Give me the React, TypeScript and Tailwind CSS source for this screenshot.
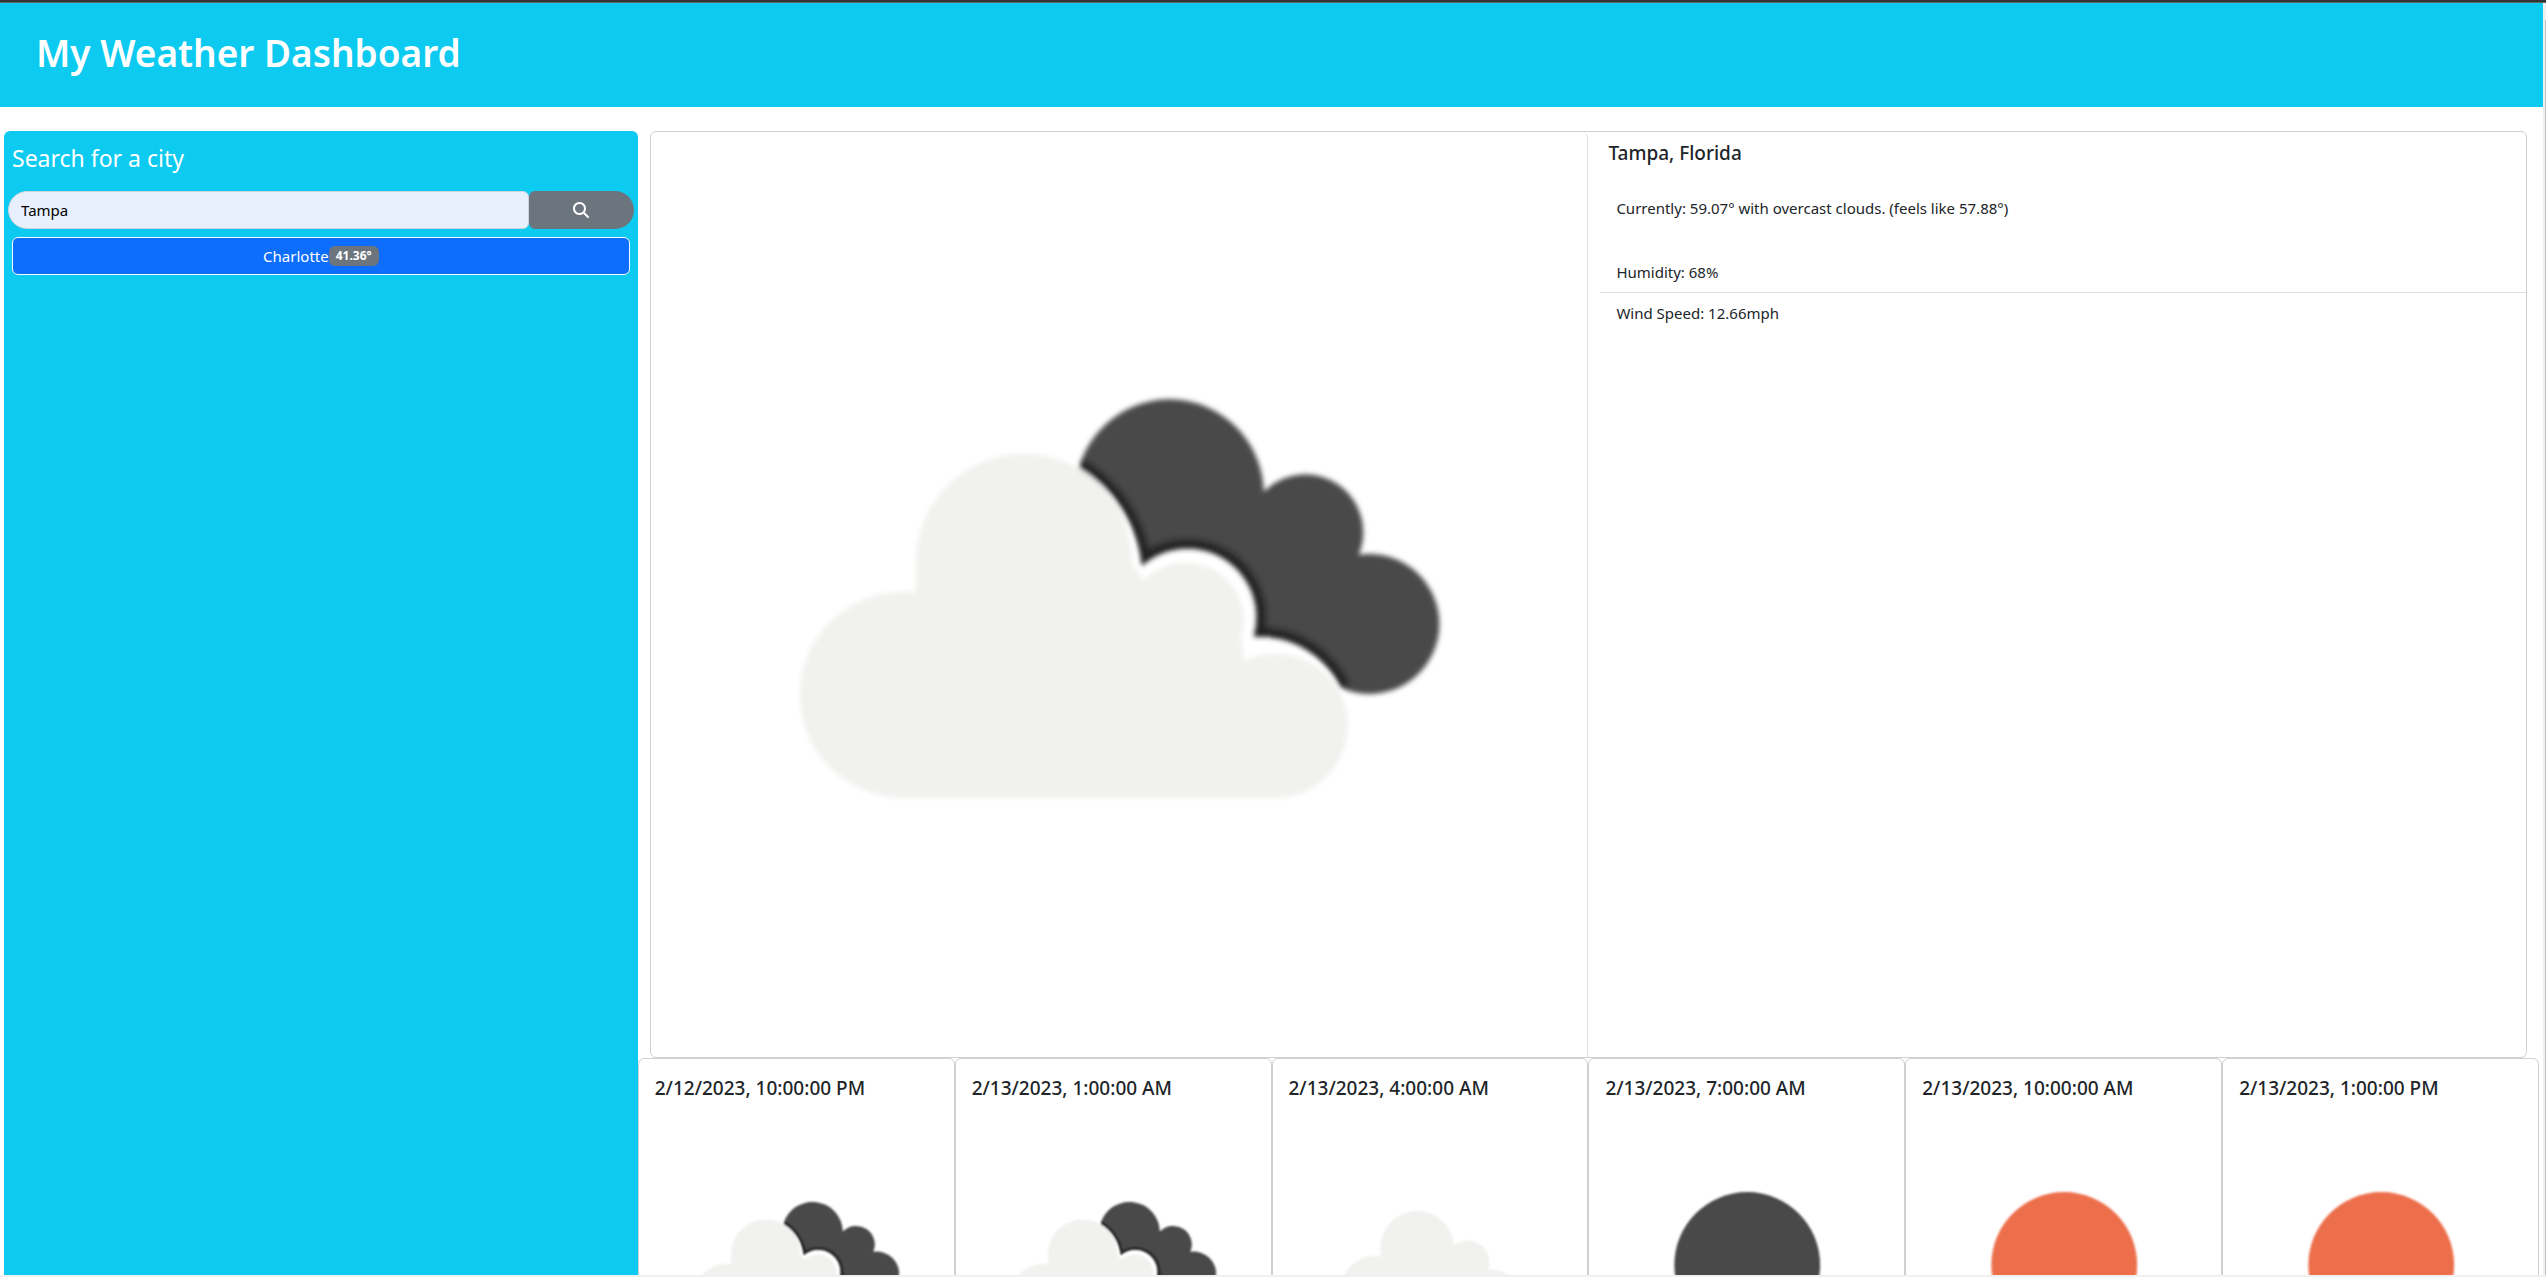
import React from "react";

type IconKind = "broken" | "scattered" | "night" | "day";

function LightCloud() {
  return (
    <g fill="#f1f1ef">
      <circle cx="252" cy="563" r="103" />
      <circle cx="373" cy="430" r="108" />
      <circle cx="535" cy="489" r="58" />
      <circle cx="625" cy="594" r="72" />
      <path d="M252 666V480L265 463V427L370 400L480 430L497 455L590 500L593 528L625 560V666Z" />
    </g>
  );
}

function ScatteredCloud() {
  return (
    <g fill="#f1f1ef">
      <circle cx="296" cy="540" r="105" />
      <circle cx="427" cy="411" r="115" />
      <circle cx="584" cy="456" r="68" />
      <circle cx="661" cy="562" r="83" />
      <path d="M296 645V450L312 435L427 380L542 411L640 490L661 500V645Z" />
    </g>
  );
}

const innerEdge =
  "M690 556A90 90 0 0 0 603 505A69 69 0 0 0 491 434A128 128 0 0 0 428 336";

const darkCloud =
  "M428 336A94.3 94.3 0 0 1 613 360A58 58 0 0 1 708 423A70 70 0 1 1 690 556A90 90 0 0 0 603 505A69 69 0 0 0 491 434A128 128 0 0 0 428 336Z";

function WeatherIcon({ kind, id, label }: { kind: IconKind; id: string; label: string }) {
  const clip = `${id}-clip`;
  const soft = `${id}-soft`;
  const softer = `${id}-softer`;
  return (
    <svg viewBox="0 0 937 925" className="block h-auto w-full" role="img" aria-label={label}>
      <defs>
        <filter id={soft} x="-5%" y="-5%" width="110%" height="110%">
          <feGaussianBlur stdDeviation="2.5" />
        </filter>
        <filter id={softer} x="-10%" y="-10%" width="120%" height="120%">
          <feGaussianBlur stdDeviation="2" />
        </filter>
        <clipPath id={clip}>
          <path d={darkCloud} />
        </clipPath>
      </defs>
      <g filter={`url(#${soft})`}>
        {kind === "broken" && (
          <>
            <LightCloud />
            <g clipPath={`url(#${clip})`}>
              <rect x="400" y="240" width="420" height="350" fill="#484849" />
              <path d={innerEdge} fill="none" stroke="#202022" strokeWidth="18" filter={`url(#${softer})`} />
            </g>
          </>
        )}
        {kind === "scattered" && <ScatteredCloud />}
        {kind === "night" && <circle cx="471" cy="464" r="227" fill="#484849" />}
        {kind === "day" && <circle cx="471" cy="464" r="227" fill="#ec6e4c" />}
      </g>
    </svg>
  );
}

const forecast: { time: string; kind: IconKind; label: string }[] = [
  { time: "2/12/2023, 10:00:00 PM", kind: "broken", label: "Overcast clouds" },
  { time: "2/13/2023, 1:00:00 AM", kind: "broken", label: "Broken clouds" },
  { time: "2/13/2023, 4:00:00 AM", kind: "scattered", label: "Scattered clouds" },
  { time: "2/13/2023, 7:00:00 AM", kind: "night", label: "Clear night" },
  { time: "2/13/2023, 10:00:00 AM", kind: "day", label: "Clear sky" },
  { time: "2/13/2023, 1:00:00 PM", kind: "day", label: "Clear sky" },
];

function SearchPanel() {
  return (
    <aside className="w-1/4 rounded-md bg-[#0dcaf0] px-1">
      <h2 className="px-1 pt-3 text-[23px] leading-[30px] text-white">
        <label htmlFor="city">Search for a city</label>
      </h2>
      <form className="mt-[18px] flex h-[38px]" onSubmit={(e) => e.preventDefault()}>
        <input
          id="city"
          type="text"
          defaultValue="Tampa"
          className="min-w-0 flex-1 rounded-l-[19px] rounded-r-md border border-[#ced4da] bg-[#e8f0fe] px-3 text-[15px] text-black outline-none"
        />
        <button
          type="submit"
          aria-label="Search"
          className="flex w-[105px] items-center justify-center rounded-l-md rounded-r-[19px] bg-[#6c757d] text-white"
        >
          <svg viewBox="0 0 512 512" className="size-4" fill="currentColor" aria-hidden="true">
            <path d="M416 208c0 45.9-14.9 88.3-40 122.7L502.600 457.400c12.500 12.500 12.500 32.800 0 45.300s-32.800 12.500-45.300 0L330.700 376c-34.400 25.200-76.800 40-122.700 40C93.100 416 0 322.900 0 208S93.100 0 208 0S416 93.100 416 208zM208 352a144 144 0 1 0 0-288 144 144 0 1 0 0 288z" />
          </svg>
        </button>
      </form>
      <div className="px-1 pt-2">
        <button
          type="button"
          className="flex h-[38px] w-full items-center justify-center rounded-md border border-[#f8f9fa] bg-[#0d6efd] text-[15px] text-white"
        >
          Charlotte
          <span className="rounded-md bg-[#6c757d] px-[7px] py-1 text-xs leading-3 font-bold">41.36°</span>
        </button>
      </div>
    </aside>
  );
}

function CurrentWeather() {
  return (
    <article className="mx-3 flex rounded-md border border-[#d0d0d0]">
      <div className="w-1/2 rounded-tr-md border-r border-[#dedede]">
        <WeatherIcon kind="broken" id="current" label="Overcast clouds" />
      </div>
      <div className="w-1/2 pl-3 text-[#212529]">
        <h3 className="px-2 pt-[9px] text-[19px] leading-6 font-medium">Tampa, Florida</h3>
        <p className="px-4 pt-[31px] text-[15px] leading-6">
          Currently: 59.07° with overcast clouds. (feels like 57.88°)
        </p>
        <ul className="pt-8 text-[15px] leading-6">
          <li className="border-b border-[#dedede] px-4 py-2">Humidity: 68%</li>
          <li className="px-4 py-2">Wind Speed: 12.66mph</li>
        </ul>
      </div>
    </article>
  );
}

export default function App() {
  return (
    <div className="flex h-screen flex-col overflow-hidden bg-white font-['Segoe_UI','Noto_Sans',sans-serif]">
      <div className="h-[3px] shrink-0 border-b border-[#666] bg-[#333]" />
      <div className="flex min-h-0 flex-1">
        <div className="min-w-0 flex-1 overflow-hidden">
          <header className="bg-[#0dcaf0] px-9 pt-[26px] pb-[30px]">
            <h1 className="text-[37px] leading-[48px] font-semibold text-white">My Weather Dashboard</h1>
          </header>
          <main className="flex px-1 pt-6">
            <SearchPanel />
            <section className="w-3/4">
              <CurrentWeather />
              <div className="grid grid-cols-6">
                {forecast.map((f, i) => (
                  <article key={f.time} className="rounded-md border border-[#d0d0d0] px-[7px] pb-6">
                    <h3 className="px-[9px] pt-[17px] text-[19px] leading-6 font-medium text-[#212529]">{f.time}</h3>
                    <div className="pt-4">
                      <WeatherIcon kind={f.kind} id={`forecast-${i}`} label={f.label} />
                    </div>
                  </article>
                ))}
              </div>
            </section>
          </main>
        </div>
        <div className="w-[3px] shrink-0 bg-[#f0f0f0] pt-[17px]">
          <div className="ml-auto h-full w-px bg-[#c1c1c1]" />
        </div>
      </div>
      <div className="h-[2px] shrink-0 bg-[#f0f0f0]" />
    </div>
  );
}
